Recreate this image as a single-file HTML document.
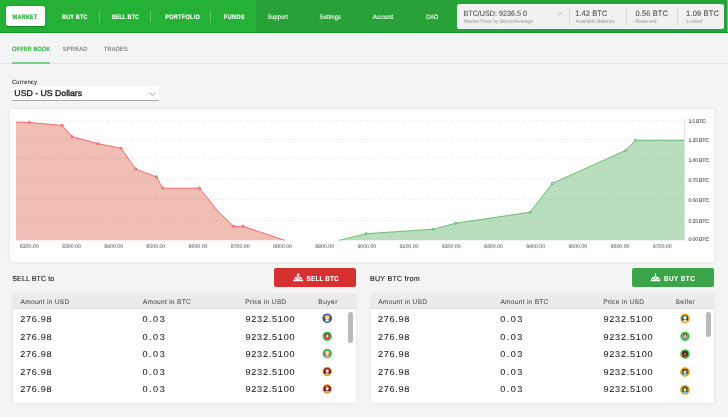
<!DOCTYPE html>
<html><head><meta charset="utf-8"><title>Bisq</title>
<style>
html,body{margin:0;padding:0;}
body{width:728px;height:417px;overflow:hidden;background:#f4f4f4;position:relative;font-family:"Liberation Sans",sans-serif;}
.a{position:absolute;}
.t{position:absolute;white-space:pre;line-height:14px;height:14px;text-rendering:geometricPrecision;}
#hdrL{left:0;top:0;width:256.3px;height:32px;background:#25b135;}
#hdrR{left:256.3px;top:0;width:471.7px;height:32px;background:#28a238;}
#hdrB{left:0;top:31.8px;width:728px;height:1.6px;background:#0e9d20;}
#hdrW{left:0;top:33.4px;width:728px;height:1.6px;background:#fcfbfc;}
#mkt{left:6px;top:5.6px;width:39px;height:20.2px;background:#fff;border-radius:2.6px;box-shadow:0 0.8px 1.2px rgba(0,90,10,.55);}
.nsep{top:10.5px;width:1px;height:12px;background:rgba(255,255,255,.28);}
#pbox{left:457.3px;top:4.2px;width:266.9px;height:24.5px;background:#f1f1f1;border-radius:2.6px;}
.psep{top:7.5px;width:1px;height:17.5px;background:#cfe3d1;}
#tabu{left:12px;top:62.2px;width:38.1px;height:1.7px;background:#7bd086;}
#tabl{left:0;top:63.2px;width:728px;height:0.9px;background:#e7e7e7;}
#dd{left:12px;top:86.4px;width:147.2px;height:14px;background:#fff;border-bottom:0.9px solid #a9a9a9;}
#card{left:10px;top:108.9px;width:704.4px;height:152.8px;background:#fff;box-shadow:0 0 3px rgba(0,0,0,.08);}
.tbl{top:294.2px;height:109.3px;background:#fff;box-shadow:0 0 2.5px rgba(0,0,0,.09);}
.th{left:0;top:0;right:0;height:13.6px;background:#ebebeb;border-bottom:0.7px solid #e1e1e1;}
#tL{left:13px;width:343.2px;}
#tR{left:371px;width:343px;}
.btn{top:268.1px;height:19.1px;border-radius:2px;}
#bS{left:274.1px;width:82.1px;background:#d63031;}
#bB{left:632.1px;width:81.8px;background:#3aa548;}
.sb{width:4.5px;border-radius:2.3px;background:#bababa;top:312px;}
svg{position:absolute;left:0;top:0;}
#txt{position:absolute;left:0;top:0;width:728px;height:417px;will-change:transform;}
</style></head>
<body>
<div class="a" id="hdrL"></div><div class="a" id="hdrR"></div><div class="a" id="hdrB"></div><div class="a" id="hdrW"></div>
<div class="a" style="left:255.9px;top:0;width:1.3px;height:32px;background:linear-gradient(90deg,rgba(0,70,0,0),rgba(0,70,0,.13))"></div>
<div class="a" style="left:726.8px;top:0;width:1.2px;height:32px;background:rgba(255,255,255,.32)"></div>
<div class="a" id="mkt"></div>
<div class="a nsep" style="left:99px"></div><div class="a nsep" style="left:149.8px"></div><div class="a nsep" style="left:209.8px"></div>
<div class="a" id="pbox"></div>
<div class="a psep" style="left:569px"></div><div class="a psep" style="left:626px"></div><div class="a psep" style="left:677px"></div>
<div class="a" id="tabl"></div><div class="a" id="tabu"></div>
<div class="a" id="dd"></div>
<div class="a" id="card"></div>
<div class="a tbl" id="tL"><div class="a th"></div></div>
<div class="a tbl" id="tR"><div class="a th"></div></div>
<div class="a btn" id="bS"></div><div class="a btn" id="bB"></div>
<div class="a sb" style="left:348.4px;height:30.8px"></div>
<div class="a sb" style="left:706.1px;height:24.5px"></div>
<svg width="728" height="417" viewBox="0 0 728 417">
<line x1="16" x2="684" y1="120.8" y2="120.8" stroke="#eeeeee" stroke-width="0.9" stroke-dasharray="4 2.04" stroke-dashoffset="0.9"/>
<line x1="16" x2="684" y1="139.5" y2="139.5" stroke="#eeeeee" stroke-width="0.9" stroke-dasharray="4 2.04" stroke-dashoffset="0.9"/>
<line x1="16" x2="684" y1="157.9" y2="157.9" stroke="#eeeeee" stroke-width="0.9" stroke-dasharray="4 2.04" stroke-dashoffset="0.9"/>
<line x1="16" x2="684" y1="178.8" y2="178.8" stroke="#eeeeee" stroke-width="0.9" stroke-dasharray="4 2.04" stroke-dashoffset="0.9"/>
<line x1="16" x2="684" y1="199.3" y2="199.3" stroke="#eeeeee" stroke-width="0.9" stroke-dasharray="4 2.04" stroke-dashoffset="0.9"/>
<line x1="16" x2="684" y1="220.5" y2="220.5" stroke="#eeeeee" stroke-width="0.9" stroke-dasharray="4 2.04" stroke-dashoffset="0.9"/>
<line x1="684.5" x2="684.5" y1="119" y2="240.5" stroke="#d8d8d8" stroke-width="0.8"/>
<polygon points="16.0,122.1 29.5,122.5 62.2,125.4 71.7,136.5 98.1,143.7 121.2,148.3 135.6,169.0 156.4,176.9 162.7,188.2 199.4,188.2 217.8,211.1 233.6,226.3 243.2,226.3 284.8,240.3 16,240.3" fill="#d84a32" fill-opacity="0.36"/>
<polyline points="16.0,122.1 29.5,122.5 62.2,125.4 71.7,136.5 98.1,143.7 121.2,148.3 135.6,169.0 156.4,176.9 162.7,188.2 199.4,188.2 217.8,211.1 233.6,226.3 243.2,226.3 284.8,240.3" fill="none" stroke="#f0545c" stroke-width="0.85" stroke-linejoin="round"/>
<circle cx="29.5" cy="122.5" r="1.1" fill="#fbdedc" stroke="#ee4452" stroke-width="0.9"/>
<circle cx="62.2" cy="125.4" r="1.1" fill="#fbdedc" stroke="#ee4452" stroke-width="0.9"/>
<circle cx="71.7" cy="136.5" r="1.1" fill="#fbdedc" stroke="#ee4452" stroke-width="0.9"/>
<circle cx="98.1" cy="143.7" r="1.1" fill="#fbdedc" stroke="#ee4452" stroke-width="0.9"/>
<circle cx="121.2" cy="148.3" r="1.1" fill="#fbdedc" stroke="#ee4452" stroke-width="0.9"/>
<circle cx="135.6" cy="169.0" r="1.1" fill="#fbdedc" stroke="#ee4452" stroke-width="0.9"/>
<circle cx="156.4" cy="176.9" r="1.1" fill="#fbdedc" stroke="#ee4452" stroke-width="0.9"/>
<circle cx="162.7" cy="188.2" r="1.1" fill="#fbdedc" stroke="#ee4452" stroke-width="0.9"/>
<circle cx="199.4" cy="188.2" r="1.1" fill="#fbdedc" stroke="#ee4452" stroke-width="0.9"/>
<circle cx="233.6" cy="226.3" r="1.1" fill="#fbdedc" stroke="#ee4452" stroke-width="0.9"/>
<circle cx="243.2" cy="226.3" r="1.1" fill="#fbdedc" stroke="#ee4452" stroke-width="0.9"/>
<polygon points="339.4,240.3 366.2,233.7 433.1,229.3 455.7,223.2 530.1,212.2 552.4,183.4 625.8,150.3 635.5,140.3 684.0,140.3 684,240.3" fill="#3ea34a" fill-opacity="0.36"/>
<polyline points="339.4,240.3 366.2,233.7 433.1,229.3 455.7,223.2 530.1,212.2 552.4,183.4 625.8,150.3 635.5,140.3 684.0,140.3" fill="none" stroke="#5db868" stroke-width="0.9" stroke-linejoin="round"/>
<circle cx="366.2" cy="233.7" r="1.1" fill="#d9f0dc" stroke="#4fae5b" stroke-width="0.9"/>
<circle cx="433.1" cy="229.3" r="1.1" fill="#d9f0dc" stroke="#4fae5b" stroke-width="0.9"/>
<circle cx="455.7" cy="223.2" r="1.1" fill="#d9f0dc" stroke="#4fae5b" stroke-width="0.9"/>
<circle cx="530.1" cy="212.2" r="1.1" fill="#d9f0dc" stroke="#4fae5b" stroke-width="0.9"/>
<circle cx="552.4" cy="183.4" r="1.1" fill="#d9f0dc" stroke="#4fae5b" stroke-width="0.9"/>
<circle cx="625.8" cy="150.3" r="1.1" fill="#d9f0dc" stroke="#4fae5b" stroke-width="0.9"/>
<circle cx="635.5" cy="140.3" r="1.1" fill="#d9f0dc" stroke="#4fae5b" stroke-width="0.9"/>
<polyline points="150.1,93.2 152.45,95.3 154.8,93.2" fill="none" stroke="#8c8c8c" stroke-width="0.75" stroke-linecap="round" stroke-linejoin="round"/>
<polyline points="557.2,12.7 559.5,14.8 561.8,12.7" fill="none" stroke="#a8a8a8" stroke-width="0.65" stroke-linecap="round" stroke-linejoin="round"/>
<path d="M293.20,280.7 L295.50,276.70 H300.90 L303.20,280.7 a0.6,0.6 0 0 1 -0.6,0.6 H293.80 a0.6,0.6 0 0 1 -0.6,-0.6 Z M294.60,279.25 a0.95,0.58 0 1 0 1.90,0 a0.95,0.58 0 1 0 -1.90,0 Z M299.90,279.25 a0.95,0.58 0 1 0 1.90,0 a0.95,0.58 0 1 0 -1.90,0 Z M297.40,278.35 a0.80,0.55 0 1 0 1.60,0 a0.80,0.55 0 1 0 -1.60,0 Z M296.30,277.45 a0.55,0.30 0 1 0 1.10,0 a0.55,0.30 0 1 0 -1.10,0 Z M299.00,277.45 a0.55,0.30 0 1 0 1.10,0 a0.55,0.30 0 1 0 -1.10,0 Z" fill="#fff" fill-rule="evenodd"/>
<path d="M296.80,275.35 L298.20,273.3 L299.60,275.35 Z" fill="#fff" stroke="#fff" stroke-width="0.3" stroke-linejoin="round"/>
<line x1="298.20" x2="298.20" y1="275" y2="277" stroke="#fff" stroke-width="0.9"/>
<path d="M650.50,280.7 L652.30,277.10 H658.70 L660.50,280.7 a0.6,0.6 0 0 1 -0.6,0.6 H651.10 a0.6,0.6 0 0 1 -0.6,-0.6 Z M651.90,279.25 a0.95,0.58 0 1 0 1.90,0 a0.95,0.58 0 1 0 -1.90,0 Z M657.20,279.25 a0.95,0.58 0 1 0 1.90,0 a0.95,0.58 0 1 0 -1.90,0 Z M654.70,278.60 a0.80,0.55 0 1 0 1.60,0 a0.80,0.55 0 1 0 -1.60,0 Z M653.60,277.85 a0.55,0.30 0 1 0 1.10,0 a0.55,0.30 0 1 0 -1.10,0 Z M656.30,277.85 a0.55,0.30 0 1 0 1.10,0 a0.55,0.30 0 1 0 -1.10,0 Z" fill="#fff" fill-rule="evenodd"/>
<line x1="655.50" x2="655.50" y1="273.2" y2="276.4" stroke="#fff" stroke-width="0.9"/>
<path d="M654.10,276 L655.50,277.6 L656.90,276 Z" fill="#fff" stroke="#fff" stroke-width="0.3" stroke-linejoin="round"/>
<defs><clipPath id="cp" clipPathUnits="userSpaceOnUse"><circle cx="0" cy="0" r="3.9"/></clipPath></defs>
<g transform="translate(327.2,318.3)"><circle r="4.00" fill="#2a5596" stroke="#1f4f8f" stroke-width="1.15"/><g clip-path="url(#cp)"><ellipse cx="0" cy="3.9" rx="2.8" ry="2.3" fill="#fdf6ea"/><circle cx="0" cy="-1" r="2.7" fill="#f4b24c"/><ellipse cx="0" cy="-0.2" rx="1.30" ry="1.65" fill="#fbe6c8"/></g><circle r="4.00" fill="none" stroke="#1f4f8f" stroke-width="1.15"/></g>
<g transform="translate(327.2,336.2)"><circle r="4.00" fill="#9a6a58" stroke="#3cc84c" stroke-width="1.15"/><g clip-path="url(#cp)"><ellipse cx="0" cy="3.9" rx="2.8" ry="2.3" fill="#e3463c"/><circle cx="0" cy="-1" r="2.3" fill="#7a4636"/><ellipse cx="0" cy="-0.2" rx="1.30" ry="1.65" fill="#f2c2b2"/></g><circle r="4.00" fill="none" stroke="#3cc84c" stroke-width="1.15"/></g>
<g transform="translate(327.2,353.6)"><circle r="4.00" fill="#ac5c92" stroke="#3cc84c" stroke-width="1.15"/><g clip-path="url(#cp)"><ellipse cx="0" cy="3.9" rx="2.8" ry="2.3" fill="#dccaa8"/><circle cx="0" cy="-1" r="2.2" fill="#ecc674"/><ellipse cx="0" cy="-0.2" rx="1.30" ry="1.65" fill="#f8e0c4"/></g><circle r="4.00" fill="none" stroke="#3cc84c" stroke-width="1.15"/></g>
<g transform="translate(327.2,371.5)"><circle r="4.23" fill="#6e1040" stroke="#f0a038" stroke-width="0.70"/><g clip-path="url(#cp)"><ellipse cx="0" cy="3.9" rx="2.8" ry="2.3" fill="#a8d048"/><circle cx="0" cy="-1" r="1.9" fill="#f26a3a"/><ellipse cx="0" cy="-0.2" rx="1.23" ry="1.57" fill="#ffffff"/></g><circle r="4.23" fill="none" stroke="#f0a038" stroke-width="0.70"/></g>
<g transform="translate(327.2,389.0)"><circle r="4.23" fill="#6e1040" stroke="#f0a038" stroke-width="0.70"/><g clip-path="url(#cp)"><ellipse cx="0" cy="3.9" rx="2.8" ry="2.3" fill="#a8d048"/><circle cx="0" cy="-1" r="1.9" fill="#f26a3a"/><ellipse cx="0" cy="-0.2" rx="1.23" ry="1.57" fill="#ffffff"/></g><circle r="4.23" fill="none" stroke="#f0a038" stroke-width="0.70"/></g>
<g transform="translate(685.0,318.4)"><circle r="4.00" fill="#1f4a58" stroke="#f2a020" stroke-width="1.15"/><g clip-path="url(#cp)"><ellipse cx="0" cy="3.9" rx="2.8" ry="2.3" fill="#f4ead6"/><circle cx="0" cy="-1" r="1.7" fill="#f6e6c8"/><ellipse cx="0" cy="-0.2" rx="1.30" ry="1.65" fill="#f8ecd4"/></g><circle r="4.00" fill="none" stroke="#f2a020" stroke-width="1.15"/></g>
<g transform="translate(685.0,336.3)"><circle r="4.00" fill="#90aa9a" stroke="#3cc84c" stroke-width="1.15"/><g clip-path="url(#cp)"><ellipse cx="0" cy="3.9" rx="2.8" ry="2.3" fill="#8a8a8a"/><circle cx="0" cy="-1" r="2.1" fill="#6a4030"/><ellipse cx="0" cy="-0.2" rx="1.30" ry="1.65" fill="#f0c8b8"/></g><circle r="4.00" fill="none" stroke="#3cc84c" stroke-width="1.15"/></g>
<g transform="translate(685.0,354.0)"><circle r="4.00" fill="#6a3a2a" stroke="#3cc84c" stroke-width="1.15"/><g clip-path="url(#cp)"><ellipse cx="0" cy="3.9" rx="2.8" ry="2.3" fill="#7a4a3a"/><circle cx="0" cy="-1" r="2.1" fill="#4a2418"/><ellipse cx="0" cy="-0.2" rx="0.72" ry="0.91" fill="#e9d6cc"/></g><circle r="4.00" fill="none" stroke="#3cc84c" stroke-width="1.15"/></g>
<g transform="translate(685.0,372.0)"><circle r="4.08" fill="#5a7a38" stroke="#f2a020" stroke-width="1.00"/><g clip-path="url(#cp)"><ellipse cx="0" cy="3.9" rx="2.8" ry="2.3" fill="#80c8e8"/><circle cx="0" cy="-1" r="2.1" fill="#5a2a38"/><ellipse cx="0" cy="-0.2" rx="1.30" ry="1.65" fill="#f6e6c0"/></g><circle r="4.08" fill="none" stroke="#f2a020" stroke-width="1.00"/></g>
<g transform="translate(685.0,389.8)"><circle r="4.08" fill="#5a7a38" stroke="#f2a020" stroke-width="1.00"/><g clip-path="url(#cp)"><ellipse cx="0" cy="3.9" rx="2.8" ry="2.3" fill="#80c8e8"/><circle cx="0" cy="-1" r="2.1" fill="#5a2a38"/><ellipse cx="0" cy="-0.2" rx="1.30" ry="1.65" fill="#f6e6c0"/></g><circle r="4.08" fill="none" stroke="#f2a020" stroke-width="1.00"/></g>
</svg>
<div id="txt">
<span class="t" style="left:12.62px;top:11px;color:#22ab32;font-size:5.51px;font-weight:700;letter-spacing:0.25px;transform:scaleY(1.183);-webkit-text-stroke:0.12px #22ab32;">MARKET</span>
<span class="t" style="left:62.06px;top:11px;color:#fff;font-size:5.51px;font-weight:700;letter-spacing:0.18px;transform:scaleY(1.183);-webkit-text-stroke:0.12px #fff;">BUY BTC</span>
<span class="t" style="left:111.65px;top:11px;color:#fff;font-size:5.51px;font-weight:700;letter-spacing:0.09px;transform:scaleY(1.183);-webkit-text-stroke:0.12px #fff;">SELL BTC</span>
<span class="t" style="left:165.19px;top:11px;color:#fff;font-size:5.51px;font-weight:700;letter-spacing:0.31px;transform:scaleY(1.183);-webkit-text-stroke:0.12px #fff;">PORTFOLIO</span>
<span class="t" style="left:223.98px;top:11px;color:#fff;font-size:5.51px;font-weight:700;letter-spacing:0.39px;transform:scaleY(1.183);-webkit-text-stroke:0.12px #fff;">FUNDS</span>
<span class="t" style="left:267.49px;top:11px;color:#f4fbf5;font-size:5.77px;letter-spacing:0.02px;transform:scaleY(1.147);-webkit-text-stroke:0.08px #f4fbf5;">Support</span>
<span class="t" style="left:319.60px;top:11px;color:#f4fbf5;font-size:5.77px;letter-spacing:0.06px;transform:scaleY(1.147);-webkit-text-stroke:0.08px #f4fbf5;">Settings</span>
<span class="t" style="left:372.68px;top:11px;color:#f4fbf5;font-size:5.77px;letter-spacing:-0.05px;transform:scaleY(1.147);-webkit-text-stroke:0.08px #f4fbf5;">Account</span>
<span class="t" style="left:426.34px;top:11px;color:#f4fbf5;font-size:5.77px;letter-spacing:-0.29px;transform:scaleY(1.147);-webkit-text-stroke:0.08px #f4fbf5;">DAO</span>
<span class="t" style="left:463.48px;top:7px;color:#505050;font-size:7.18px;letter-spacing:0.01px;transform:scaleY(1.072);-webkit-text-stroke:0.08px #505050;">BTC/USD: 9236.5 0</span>
<span class="t" style="left:463.93px;top:15px;color:#a6a6a6;font-size:4.98px;letter-spacing:0.00px;transform:scaleY(1.075);-webkit-text-stroke:0.08px #a6a6a6;">Market Price by BitcoinAverage</span>
<span class="t" style="left:575.19px;top:7px;color:#505050;font-size:7.53px;letter-spacing:0.05px;transform:scaleY(1.042);-webkit-text-stroke:0.08px #505050;">1.42 BTC</span>
<span class="t" style="left:575.82px;top:15px;color:#a6a6a6;font-size:4.98px;letter-spacing:-0.02px;transform:scaleY(1.075);-webkit-text-stroke:0.08px #a6a6a6;">Available Balance</span>
<span class="t" style="left:635.56px;top:7px;color:#505050;font-size:7.53px;letter-spacing:0.08px;transform:scaleY(1.042);-webkit-text-stroke:0.08px #505050;">0.56 BTC</span>
<span class="t" style="left:635.48px;top:15px;color:#a6a6a6;font-size:4.98px;letter-spacing:-0.03px;transform:scaleY(1.075);-webkit-text-stroke:0.08px #a6a6a6;">Reserved</span>
<span class="t" style="left:686.07px;top:7px;color:#505050;font-size:7.53px;letter-spacing:0.15px;transform:scaleY(1.042);-webkit-text-stroke:0.08px #505050;">1.09 BTC</span>
<span class="t" style="left:686.31px;top:15px;color:#a6a6a6;font-size:4.98px;letter-spacing:0.06px;transform:scaleY(1.075);-webkit-text-stroke:0.08px #a6a6a6;">Locked</span>
<span class="t" style="left:12.10px;top:43px;color:#2bb13a;font-size:5.70px;letter-spacing:0.08px;transform:scaleY(1.083);-webkit-text-stroke:0.20px #2bb13a;">OFFER BOOK</span>
<span class="t" style="left:62.87px;top:43px;color:#6e6e6e;font-size:5.70px;letter-spacing:0.21px;transform:scaleY(1.083);-webkit-text-stroke:0.08px #6e6e6e;">SPREAD</span>
<span class="t" style="left:103.99px;top:43px;color:#6e6e6e;font-size:5.70px;letter-spacing:0.15px;transform:scaleY(1.083);-webkit-text-stroke:0.08px #6e6e6e;">TRADES</span>
<span class="t" style="left:11.89px;top:76px;color:#1f1f1f;font-size:5.70px;letter-spacing:0.31px;transform:scaleY(1.083);-webkit-text-stroke:0.08px #1f1f1f;">Currency</span>
<span class="t" style="left:14.33px;top:86px;color:#1c1c1c;font-size:8.76px;letter-spacing:-0.02px;transform:scaleY(0.971);-webkit-text-stroke:0.35px #1c1c1c;">USD - US Dollars</span>
<span class="t" style="left:19.77px;top:240px;color:#6a6a6a;font-size:5.26px;letter-spacing:-0.01px;-webkit-text-stroke:0.08px #6a6a6a;">8200.00</span>
<span class="t" style="left:61.97px;top:240px;color:#6a6a6a;font-size:5.26px;letter-spacing:-0.01px;-webkit-text-stroke:0.08px #6a6a6a;">8300.00</span>
<span class="t" style="left:104.17px;top:240px;color:#6a6a6a;font-size:5.26px;letter-spacing:-0.01px;-webkit-text-stroke:0.08px #6a6a6a;">8400.00</span>
<span class="t" style="left:146.37px;top:240px;color:#6a6a6a;font-size:5.26px;letter-spacing:-0.01px;-webkit-text-stroke:0.08px #6a6a6a;">8500.00</span>
<span class="t" style="left:188.57px;top:240px;color:#6a6a6a;font-size:5.26px;letter-spacing:-0.01px;-webkit-text-stroke:0.08px #6a6a6a;">8600.00</span>
<span class="t" style="left:230.77px;top:240px;color:#6a6a6a;font-size:5.26px;letter-spacing:-0.01px;-webkit-text-stroke:0.08px #6a6a6a;">8700.00</span>
<span class="t" style="left:272.97px;top:240px;color:#6a6a6a;font-size:5.26px;letter-spacing:-0.01px;-webkit-text-stroke:0.08px #6a6a6a;">8800.00</span>
<span class="t" style="left:315.17px;top:240px;color:#6a6a6a;font-size:5.26px;letter-spacing:-0.01px;-webkit-text-stroke:0.08px #6a6a6a;">8900.00</span>
<span class="t" style="left:357.38px;top:240px;color:#6a6a6a;font-size:5.26px;letter-spacing:-0.01px;-webkit-text-stroke:0.08px #6a6a6a;">9000.00</span>
<span class="t" style="left:399.58px;top:240px;color:#6a6a6a;font-size:5.26px;letter-spacing:-0.01px;-webkit-text-stroke:0.08px #6a6a6a;">9100.00</span>
<span class="t" style="left:441.78px;top:240px;color:#6a6a6a;font-size:5.26px;letter-spacing:-0.01px;-webkit-text-stroke:0.08px #6a6a6a;">9200.00</span>
<span class="t" style="left:483.98px;top:240px;color:#6a6a6a;font-size:5.26px;letter-spacing:-0.01px;-webkit-text-stroke:0.08px #6a6a6a;">9300.00</span>
<span class="t" style="left:526.18px;top:240px;color:#6a6a6a;font-size:5.26px;letter-spacing:-0.01px;-webkit-text-stroke:0.08px #6a6a6a;">9400.00</span>
<span class="t" style="left:568.38px;top:240px;color:#6a6a6a;font-size:5.26px;letter-spacing:-0.01px;-webkit-text-stroke:0.08px #6a6a6a;">9500.00</span>
<span class="t" style="left:610.58px;top:240px;color:#6a6a6a;font-size:5.26px;letter-spacing:-0.01px;-webkit-text-stroke:0.08px #6a6a6a;">9600.00</span>
<span class="t" style="left:652.78px;top:240px;color:#6a6a6a;font-size:5.26px;letter-spacing:-0.01px;-webkit-text-stroke:0.08px #6a6a6a;">9700.00</span>
<span class="t" style="left:688.40px;top:115px;color:#4a4a4a;font-size:5.26px;letter-spacing:-0.29px;-webkit-text-stroke:0.08px #4a4a4a;">1.5 BTC</span>
<span class="t" style="left:688.50px;top:134px;color:#4a4a4a;font-size:5.26px;letter-spacing:-0.22px;-webkit-text-stroke:0.08px #4a4a4a;">1.25 BTC</span>
<span class="t" style="left:688.50px;top:154px;color:#4a4a4a;font-size:5.26px;letter-spacing:-0.22px;-webkit-text-stroke:0.08px #4a4a4a;">1.00 BTC</span>
<span class="t" style="left:688.60px;top:174px;color:#4a4a4a;font-size:5.26px;letter-spacing:-0.24px;-webkit-text-stroke:0.08px #4a4a4a;">0.75 BTC</span>
<span class="t" style="left:688.60px;top:194px;color:#4a4a4a;font-size:5.26px;letter-spacing:-0.24px;-webkit-text-stroke:0.08px #4a4a4a;">0.50 BTC</span>
<span class="t" style="left:688.60px;top:215px;color:#4a4a4a;font-size:5.26px;letter-spacing:-0.24px;-webkit-text-stroke:0.08px #4a4a4a;">0.25 BTC</span>
<span class="t" style="left:688.60px;top:233px;color:#4a4a4a;font-size:5.26px;letter-spacing:-0.24px;-webkit-text-stroke:0.08px #4a4a4a;">0.00 BTC</span>
<span class="t" style="left:12.30px;top:272px;color:#1c1c1c;font-size:7.13px;letter-spacing:0.06px;transform:scaleY(1.025);-webkit-text-stroke:0.12px #1c1c1c;">SELL BTC to</span>
<span class="t" style="left:369.97px;top:272px;color:#1c1c1c;font-size:7.13px;letter-spacing:0.24px;transform:scaleY(1.025);-webkit-text-stroke:0.12px #1c1c1c;">BUY BTC from</span>
<span class="t" style="left:306.60px;top:273px;color:#fff;font-size:6.32px;font-weight:700;letter-spacing:0.19px;transform:scaleY(1.136);-webkit-text-stroke:0.08px #fff;">SELL BTC</span>
<span class="t" style="left:663.89px;top:273px;color:#fff;font-size:6.32px;font-weight:700;letter-spacing:0.49px;transform:scaleY(1.136);-webkit-text-stroke:0.08px #fff;">BUY BTC</span>
<span class="t" style="left:20.57px;top:296px;color:#525252;font-size:6.60px;letter-spacing:0.27px;transform:scaleY(1.019);-webkit-text-stroke:0.08px #525252;">Amount in USD</span>
<span class="t" style="left:142.75px;top:296px;color:#525252;font-size:6.60px;letter-spacing:0.27px;transform:scaleY(1.019);-webkit-text-stroke:0.08px #525252;">Amount in BTC</span>
<span class="t" style="left:245.29px;top:296px;color:#525252;font-size:6.60px;letter-spacing:0.28px;transform:scaleY(1.019);-webkit-text-stroke:0.08px #525252;">Price in USD</span>
<span class="t" style="left:318.25px;top:296px;color:#525252;font-size:6.60px;letter-spacing:0.48px;transform:scaleY(1.019);-webkit-text-stroke:0.08px #525252;">Buyer</span>
<span class="t" style="left:378.14px;top:296px;color:#525252;font-size:6.60px;letter-spacing:0.28px;transform:scaleY(1.019);-webkit-text-stroke:0.08px #525252;">Amount in USD</span>
<span class="t" style="left:500.45px;top:296px;color:#525252;font-size:6.60px;letter-spacing:0.27px;transform:scaleY(1.019);-webkit-text-stroke:0.08px #525252;">Amount in BTC</span>
<span class="t" style="left:603.22px;top:296px;color:#525252;font-size:6.60px;letter-spacing:0.27px;transform:scaleY(1.019);-webkit-text-stroke:0.08px #525252;">Price in USD</span>
<span class="t" style="left:675.38px;top:296px;color:#525252;font-size:6.60px;letter-spacing:0.51px;transform:scaleY(1.019);-webkit-text-stroke:0.08px #525252;">Seller</span>
<span class="t" style="left:20.26px;top:312px;color:#1b1b1b;font-size:9.14px;letter-spacing:0.67px;transform:scaleY(0.943);-webkit-text-stroke:0.08px #1b1b1b;">276.98</span>
<span class="t" style="left:142.54px;top:312px;color:#1b1b1b;font-size:9.14px;letter-spacing:1.47px;transform:scaleY(0.943);-webkit-text-stroke:0.08px #1b1b1b;">0.03</span>
<span class="t" style="left:245.41px;top:312px;color:#1b1b1b;font-size:9.14px;letter-spacing:0.75px;transform:scaleY(0.943);-webkit-text-stroke:0.08px #1b1b1b;">9232.5100</span>
<span class="t" style="left:377.89px;top:312px;color:#1b1b1b;font-size:9.14px;letter-spacing:0.70px;transform:scaleY(0.943);-webkit-text-stroke:0.08px #1b1b1b;">276.98</span>
<span class="t" style="left:500.24px;top:312px;color:#1b1b1b;font-size:9.14px;letter-spacing:1.47px;transform:scaleY(0.943);-webkit-text-stroke:0.08px #1b1b1b;">0.03</span>
<span class="t" style="left:603.41px;top:312px;color:#1b1b1b;font-size:9.14px;letter-spacing:0.75px;transform:scaleY(0.943);-webkit-text-stroke:0.08px #1b1b1b;">9232.5100</span>
<span class="t" style="left:20.26px;top:330px;color:#1b1b1b;font-size:9.14px;letter-spacing:0.67px;transform:scaleY(0.943);-webkit-text-stroke:0.08px #1b1b1b;">276.98</span>
<span class="t" style="left:142.54px;top:330px;color:#1b1b1b;font-size:9.14px;letter-spacing:1.47px;transform:scaleY(0.943);-webkit-text-stroke:0.08px #1b1b1b;">0.03</span>
<span class="t" style="left:245.41px;top:330px;color:#1b1b1b;font-size:9.14px;letter-spacing:0.75px;transform:scaleY(0.943);-webkit-text-stroke:0.08px #1b1b1b;">9232.5100</span>
<span class="t" style="left:377.89px;top:330px;color:#1b1b1b;font-size:9.14px;letter-spacing:0.70px;transform:scaleY(0.943);-webkit-text-stroke:0.08px #1b1b1b;">276.98</span>
<span class="t" style="left:500.24px;top:330px;color:#1b1b1b;font-size:9.14px;letter-spacing:1.47px;transform:scaleY(0.943);-webkit-text-stroke:0.08px #1b1b1b;">0.03</span>
<span class="t" style="left:603.41px;top:330px;color:#1b1b1b;font-size:9.14px;letter-spacing:0.75px;transform:scaleY(0.943);-webkit-text-stroke:0.08px #1b1b1b;">9232.5100</span>
<span class="t" style="left:20.26px;top:347px;color:#1b1b1b;font-size:9.14px;letter-spacing:0.67px;transform:scaleY(0.943);-webkit-text-stroke:0.08px #1b1b1b;">276.98</span>
<span class="t" style="left:142.54px;top:347px;color:#1b1b1b;font-size:9.14px;letter-spacing:1.47px;transform:scaleY(0.943);-webkit-text-stroke:0.08px #1b1b1b;">0.03</span>
<span class="t" style="left:245.41px;top:347px;color:#1b1b1b;font-size:9.14px;letter-spacing:0.75px;transform:scaleY(0.943);-webkit-text-stroke:0.08px #1b1b1b;">9232.5100</span>
<span class="t" style="left:377.89px;top:347px;color:#1b1b1b;font-size:9.14px;letter-spacing:0.70px;transform:scaleY(0.943);-webkit-text-stroke:0.08px #1b1b1b;">276.98</span>
<span class="t" style="left:500.24px;top:347px;color:#1b1b1b;font-size:9.14px;letter-spacing:1.47px;transform:scaleY(0.943);-webkit-text-stroke:0.08px #1b1b1b;">0.03</span>
<span class="t" style="left:603.41px;top:347px;color:#1b1b1b;font-size:9.14px;letter-spacing:0.75px;transform:scaleY(0.943);-webkit-text-stroke:0.08px #1b1b1b;">9232.5100</span>
<span class="t" style="left:20.26px;top:365px;color:#1b1b1b;font-size:9.14px;letter-spacing:0.67px;transform:scaleY(0.943);-webkit-text-stroke:0.08px #1b1b1b;">276.98</span>
<span class="t" style="left:142.54px;top:365px;color:#1b1b1b;font-size:9.14px;letter-spacing:1.47px;transform:scaleY(0.943);-webkit-text-stroke:0.08px #1b1b1b;">0.03</span>
<span class="t" style="left:245.41px;top:365px;color:#1b1b1b;font-size:9.14px;letter-spacing:0.75px;transform:scaleY(0.943);-webkit-text-stroke:0.08px #1b1b1b;">9232.5100</span>
<span class="t" style="left:377.89px;top:365px;color:#1b1b1b;font-size:9.14px;letter-spacing:0.70px;transform:scaleY(0.943);-webkit-text-stroke:0.08px #1b1b1b;">276.98</span>
<span class="t" style="left:500.24px;top:365px;color:#1b1b1b;font-size:9.14px;letter-spacing:1.47px;transform:scaleY(0.943);-webkit-text-stroke:0.08px #1b1b1b;">0.03</span>
<span class="t" style="left:603.41px;top:365px;color:#1b1b1b;font-size:9.14px;letter-spacing:0.75px;transform:scaleY(0.943);-webkit-text-stroke:0.08px #1b1b1b;">9232.5100</span>
<span class="t" style="left:20.26px;top:382px;color:#1b1b1b;font-size:9.14px;letter-spacing:0.67px;transform:scaleY(0.943);-webkit-text-stroke:0.08px #1b1b1b;">276.98</span>
<span class="t" style="left:142.54px;top:382px;color:#1b1b1b;font-size:9.14px;letter-spacing:1.47px;transform:scaleY(0.943);-webkit-text-stroke:0.08px #1b1b1b;">0.03</span>
<span class="t" style="left:245.41px;top:382px;color:#1b1b1b;font-size:9.14px;letter-spacing:0.75px;transform:scaleY(0.943);-webkit-text-stroke:0.08px #1b1b1b;">9232.5100</span>
<span class="t" style="left:377.89px;top:382px;color:#1b1b1b;font-size:9.14px;letter-spacing:0.70px;transform:scaleY(0.943);-webkit-text-stroke:0.08px #1b1b1b;">276.98</span>
<span class="t" style="left:500.24px;top:382px;color:#1b1b1b;font-size:9.14px;letter-spacing:1.47px;transform:scaleY(0.943);-webkit-text-stroke:0.08px #1b1b1b;">0.03</span>
<span class="t" style="left:603.41px;top:382px;color:#1b1b1b;font-size:9.14px;letter-spacing:0.75px;transform:scaleY(0.943);-webkit-text-stroke:0.08px #1b1b1b;">9232.5100</span>
</div>
</body></html>
